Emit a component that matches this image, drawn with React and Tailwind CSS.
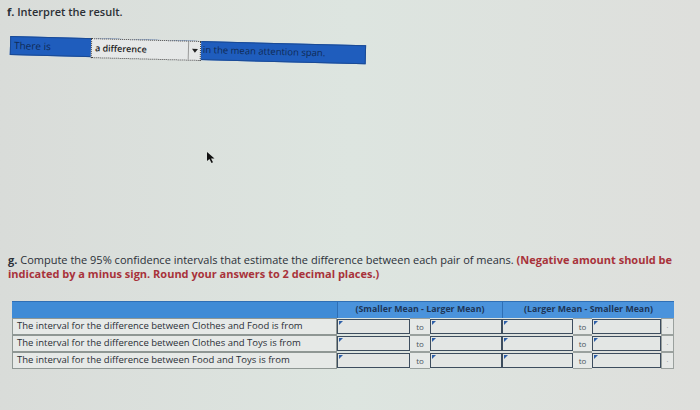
import React from "react";

function Input() {
  return (
    <div className="relative h-full border-[1.5px] border-[#3d4d5e] bg-[#e3e6e4]">
      <div className="absolute left-[1px] top-[1px] w-0 h-0 border-t-[4px] border-t-[#2d5fa8] border-r-[4px] border-r-transparent" />
    </div>
  );
}

function Row({ label }) {
  return (
    <>
      <div className="flex items-center border-[1px] border-[#8f9794] bg-[#e6e9e7] pl-[4px] text-[9.5px] text-[#2a2f36] h-[17px] whitespace-nowrap">
        {label}
      </div>
      <div className="h-[17px] py-[1px]"><Input /></div>
      <div className="h-[17px] flex items-center justify-center text-[8px] text-[#4a5560] border-y border-[#9aa19e] bg-[#e6e9e7]">to</div>
      <div className="h-[17px] py-[1px]"><Input /></div>
      <div className="h-[17px] py-[1px]"><Input /></div>
      <div className="h-[17px] flex items-center justify-center text-[8px] text-[#4a5560] border-y border-[#9aa19e] bg-[#e6e9e7]">to</div>
      <div className="h-[17px] py-[1px]"><Input /></div>
      <div className="h-[17px] flex items-center justify-center text-[7px] text-[#8a928f] border border-[#9aa19e] bg-[#e6e9e7]">.</div>
    </>
  );
}

export default function App() {
  return (
    <div
      className="relative w-[700px] h-[410px] overflow-hidden bg-gradient-to-r from-[#d9dcd9] via-[#dde5e0] to-[#dedfdc]"
      style={{ fontFamily: '"Open Sans", "Noto Sans", sans-serif' }}
    >
      <div className="pl-[7px] pt-[3px] text-[11px] font-semibold text-[#2b2f35] leading-[18px]">
        <span className="font-bold">f.</span> Interpret the result.
      </div>

      <div className="ml-[10px] mt-[15px] w-[356px] h-[19px] origin-left rotate-[1.5deg] flex bg-[#1f5dbd] border border-[#1a4a95]">
        <div className="w-[80px] flex items-center pl-[3px] text-[10px] text-[#0f2a55]">There is</div>
        <div className="w-[110px] h-[20px] -mt-[1px] flex items-center bg-[#e6e8e8] border border-dotted border-[#444]">
          <span className="flex-1 pl-[3px] text-[9px] font-semibold text-[#222]">a difference</span>
          <div className="w-[12px] h-full flex items-center justify-center border-l border-[#999]">
            <div className="w-0 h-0 border-l-[3px] border-r-[3px] border-t-[4px] border-l-transparent border-r-transparent border-t-[#222]" />
          </div>
        </div>
        <div className="flex-1 flex items-center pl-[2px] text-[9.5px] text-[#0f2a55] whitespace-nowrap">in the mean attention span.</div>
      </div>

      <svg className="absolute left-[206px] top-[151px]" width="10" height="13" viewBox="0 0 10 13">
        <path d="M1 1 L1 10 L3.5 8 L5.5 12 L7 11.3 L5 7.5 L8.5 7.5 Z" fill="#111" />
      </svg>

      <div className="absolute left-[8px] top-[253px] w-[690px] text-[11px] leading-[14px] text-[#2b3038] whitespace-nowrap">
        <div>
          <span className="font-bold">g.</span> Compute the 95% confidence intervals that estimate the difference between each pair of means.{" "}
          <span className="font-bold text-[#a8323a]">(Negative amount should be</span>
        </div>
        <div className="font-bold text-[#a8323a]">indicated by a minus sign. Round your answers to 2 decimal places.)</div>
      </div>

      <div className="absolute left-[12px] top-[301px] w-[662px] grid grid-cols-[325px_73px_20px_72px_71px_19px_69px_13px]">
        <div className="h-[17px] bg-[#3f8bd6] border-t border-[#2f6fb5]" />
        <div className="col-span-3 h-[17px] bg-[#4a93dc] border-t border-l border-[#2f6fb5] flex items-center justify-center text-[8.8px] font-bold text-[#1d3556]">
          (Smaller Mean - Larger Mean)
        </div>
        <div className="col-span-4 h-[17px] bg-[#4a93dc] border-t border-l border-[#2f6fb5] flex items-center justify-center text-[8.8px] font-bold text-[#1d3556]">
          (Larger Mean - Smaller Mean)
        </div>
        <Row label="The interval for the difference between Clothes and Food is from" />
        <Row label="The interval for the difference between Clothes and Toys is from" />
        <Row label="The interval for the difference between Food and Toys is from" />
      </div>
    </div>
  );
}
